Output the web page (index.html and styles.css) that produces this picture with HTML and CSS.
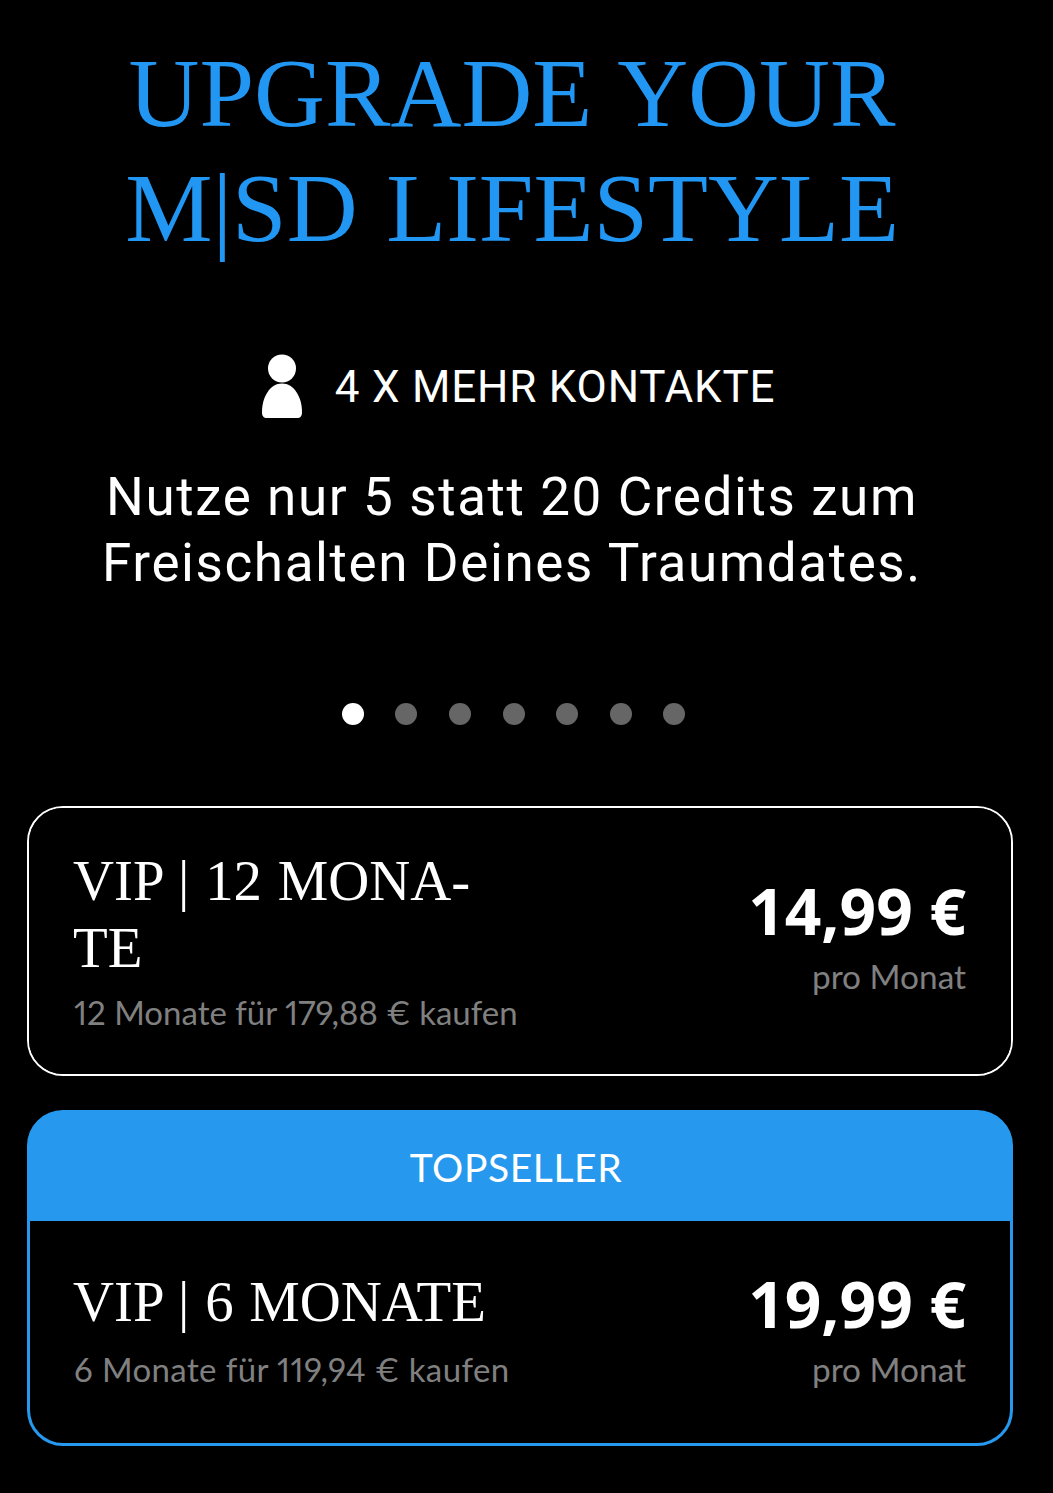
FILE: index.html
```html
<!DOCTYPE html>
<html lang="de">
<head>
    <meta charset="UTF-8">
    <meta name="viewport" content="width=device-width, initial-scale=1.0">
    <title>Upgrade your M|SD Lifestyle</title>
    <link rel="stylesheet" href="styles.css">
</head>
<body>
    <div class="container">
        <div class="intro">
            <h1>UPGRADE YOUR<br>M<span class="bar">|</span>SD LIFESTYLE</h1>

            <div class="feature">
                <div class="feature-title">
                    <svg class="feature-icon" viewBox="0 0 42 64" width="42" height="64">
                        <circle cx="21" cy="14.5" r="14"/>
                        <path d="M21 29.500C9 29.500 1 43 1 58c0 4 1.500 6 5 6h30c3.500 0 5-2 5-6C41 43 33 29.500 21 29.500z"/>
                    </svg>
                    <span>4 X MEHR KONTAKTE</span>
                </div>
                <p class="feature-text">Nutze nur 5 statt 20 Credits zum<br>Freischalten Deines Traumdates.</p>
            </div>

            <div class="dots">
                <span class="dot active"></span>
                <span class="dot"></span>
                <span class="dot"></span>
                <span class="dot"></span>
                <span class="dot"></span>
                <span class="dot"></span>
                <span class="dot"></span>
            </div>
        </div>

        <div class="plan">
            <div class="plan-body plan-body-first">
                <div class="plan-info">
                    <div class="plan-name">VIP | 12 MONA-<br>TE</div>
                    <div class="plan-note">12 Monate für 179,88 € kaufen</div>
                </div>
                <div class="plan-price">
                    <div class="price">14,99 €</div>
                    <div class="price-note">pro Monat</div>
                </div>
            </div>
        </div>

        <div class="plan plan-top">
            <div class="plan-badge">TOPSELLER</div>
            <div class="plan-body">
                <div class="plan-info">
                    <div class="plan-name">VIP | 6 MONATE</div>
                    <div class="plan-note">6 Monate für 119,94 € kaufen</div>
                </div>
                <div class="plan-price">
                    <div class="price">19,99 €</div>
                    <div class="price-note">pro Monat</div>
                </div>
            </div>
        </div>
    </div>
</body>
</html>
```

FILE: styles.css
```css
* {
    margin: 0;
    padding: 0;
    box-sizing: border-box;
}

body {
    background: #000;
    color: #fff;
    font-family: Roboto, sans-serif;
    height: 1493px;
    overflow: hidden;
}

.container {
    padding: 35px 0 0 0;
}

.intro {
    width: 1024px;
}

h1 {
    font-family: "Liberation Serif", serif;
    font-weight: 400;
    font-size: 98.2px;
    line-height: 115px;
    word-spacing: 4px;
    color: #2196f3;
    text-align: center;
    white-space: nowrap;
}

.bar {
    display: inline-block;
}

.feature {
    margin-top: 90px;
    text-align: center;
}

.feature-title {
    display: flex;
    justify-content: center;
    align-items: center;
    gap: 32px;
    font-size: 44px;
    letter-spacing: 0.8px;
    height: 64px;
    padding-left: 12px;
}

.feature-icon {
    fill: #fff;
    display: block;
    margin-top: -3px;
}

.feature-text {
    margin-top: 45px;
    font-size: 53px;
    line-height: 66px;
    letter-spacing: 1.6px;
    white-space: nowrap;
}

.dots {
    display: flex;
    justify-content: center;
    gap: 31.65px;
    margin-top: 107px;
    margin-left: 17px;
    padding-right: 14px;
}

.dot {
    width: 22px;
    height: 22px;
    border-radius: 50%;
    background: #666;
}

.dot.active {
    background: #fff;
}

.plan {
    width: 986px;
    margin-top: 81px;
    margin-left: 27px;
    border: 2px solid #fff;
    border-radius: 36px;
    overflow: hidden;
}

.plan-top {
    margin-top: 34px;
    background: #2699ee;
    border-color: #2699ee;
    border-width: 3px;
}

.plan-badge {
    background: #2699ee;
    height: 108px;
    display: flex;
    align-items: center;
    justify-content: center;
    font-family: Lato, sans-serif;
    font-size: 39px;
    letter-spacing: 0.6px;
    padding-right: 8px;
}

.plan-body {
    display: flex;
    justify-content: space-between;
    align-items: center;
    background: #000;
    height: 222px;
    padding: 0 44px 0 43px;
}

.plan-body-first {
    height: 266px;
    padding: 0 45px 0 44px;
}

.plan-name {
    font-family: "Liberation Serif", serif;
    font-size: 56.8px;
    line-height: 67px;
    word-spacing: 1.5px;
}

.plan-note {
    font-family: Lato, sans-serif;
    font-size: 33px;
    font-variant-numeric: proportional-nums;
    line-height: 44px;
    color: #808080;
    margin-top: 9px;
    margin-left: 1px;
}

.plan-info {
    padding-bottom: 2px;
}

.plan-top .plan-info {
    padding-bottom: 5px;
}

.plan-top .plan-note {
    margin-top: 12px;
    letter-spacing: 0.4px;
}

.plan-price {
    text-align: right;
    padding-bottom: 9px;
}

.plan-top .plan-price {
    padding-bottom: 5px;
}

.price {
    font-family: "Open Sans", sans-serif;
    font-weight: 700;
    font-size: 64px;
    line-height: 72px;
}

.price-note {
    font-family: Lato, sans-serif;
    font-size: 33.4px;
    line-height: 44px;
    color: #808080;
    margin-top: 7px;
}
```
